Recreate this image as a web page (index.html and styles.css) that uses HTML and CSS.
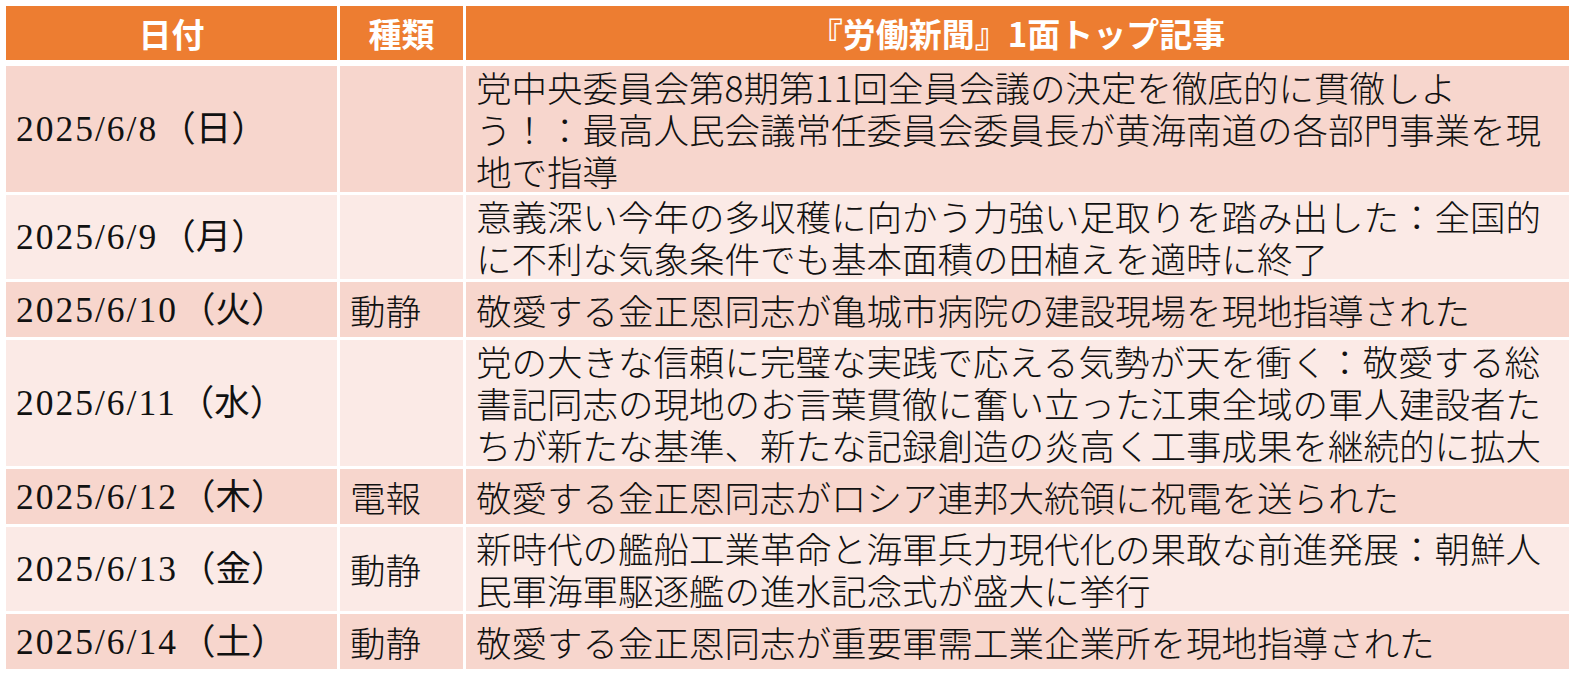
FILE: index.html
```html
<!DOCTYPE html>
<html lang="ja">
<head>
<meta charset="utf-8">
<title>労働新聞 1面トップ記事</title>
<link rel="stylesheet" href="styles.css">
</head>
<body>
<table class="news">
  <colgroup>
    <col class="c-date">
    <col class="c-kind">
    <col class="c-title">
  </colgroup>
  <thead>
    <tr>
      <th>日付</th>
      <th>種類</th>
      <th>『労働新聞』1面トップ記事</th>
    </tr>
  </thead>
  <tbody>
    <tr class="odd">
      <td class="date"><span class="num">2025/6/8</span>（日）</td>
      <td class="kind"></td>
      <td class="title">党中央委員会第8期第11回全員会議の決定を徹底的に貫徹しよ<br>う！：最高人民会議常任委員会委員長が黄海南道の各部門事業を現<br>地で指導</td>
    </tr>
    <tr class="even">
      <td class="date"><span class="num">2025/6/9</span>（月）</td>
      <td class="kind"></td>
      <td class="title">意義深い今年の多収穫に向かう力強い足取りを踏み出した：全国的<br>に不利な気象条件でも基本面積の田植えを適時に終了</td>
    </tr>
    <tr class="odd">
      <td class="date"><span class="num">2025/6/10</span>（火）</td>
      <td class="kind">動静</td>
      <td class="title">敬愛する金正恩同志が亀城市病院の建設現場を現地指導された</td>
    </tr>
    <tr class="even">
      <td class="date"><span class="num">2025/6/11</span>（水）</td>
      <td class="kind"></td>
      <td class="title">党の大きな信頼に完璧な実践で応える気勢が天を衝く：敬愛する総<br>書記同志の現地のお言葉貫徹に奮い立った江東全域の軍人建設者た<br>ちが新たな基準、新たな記録創造の炎高く工事成果を継続的に拡大</td>
    </tr>
    <tr class="odd">
      <td class="date"><span class="num">2025/6/12</span>（木）</td>
      <td class="kind">電報</td>
      <td class="title">敬愛する金正恩同志がロシア連邦大統領に祝電を送られた</td>
    </tr>
    <tr class="even">
      <td class="date"><span class="num">2025/6/13</span>（金）</td>
      <td class="kind">動静</td>
      <td class="title">新時代の艦船工業革命と海軍兵力現代化の果敢な前進発展：朝鮮人<br>民軍海軍駆逐艦の進水記念式が盛大に挙行</td>
    </tr>
    <tr class="odd">
      <td class="date"><span class="num">2025/6/14</span>（土）</td>
      <td class="kind">動静</td>
      <td class="title">敬愛する金正恩同志が重要軍需工業企業所を現地指導された</td>
    </tr>
  </tbody>
</table>
</body>
</html>
```

FILE: styles.css
```css
html, body {
  background: #ffffff;
}
body {
  margin: 3px;
  font-family: "Noto Sans CJK JP", sans-serif;
  color: #111111;
}
.news {
  border-collapse: separate;
  border-spacing: 3px;
  width: 1569px;
  table-layout: fixed;
}
.c-date { width: 331px; }
.c-kind { width: 123px; }
.c-title { width: auto; }

.news th {
  background: #ED7D31;
  color: #ffffff;
  font-weight: 700;
  font-size: 33px;
  height: 54px;
  line-height: 54px;
  padding: 0;
  text-align: center;
  border-bottom: 3px solid #ffffff;
  box-sizing: content-box;
}
.news td {
  height: 55px;
  padding: 0 0 0 10px;
  line-height: 42px;
  font-size: 35.5px;
  vertical-align: middle;
  white-space: nowrap;
}
.odd td { background: #F7D6CD; }
.even td { background: #FBEAE6; }

.date {
  font-family: "Liberation Serif", "Noto Sans CJK JP", serif;
  font-size: 36px;
}
.date .num {
  letter-spacing: 2px;
  margin-right: 2px;
}
.kind {
  font-weight: 300;
}
.title {
  font-weight: 300;
  padding-left: 9px;
}
```
